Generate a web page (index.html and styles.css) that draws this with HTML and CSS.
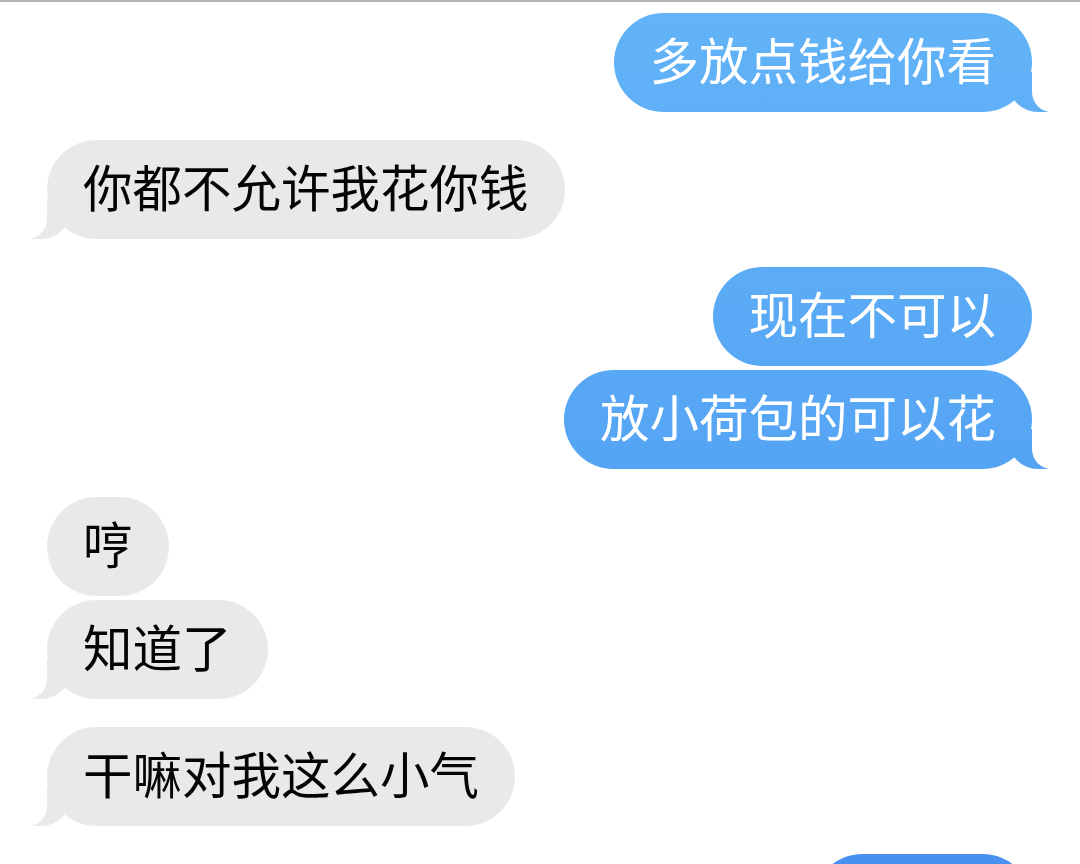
FILE: index.html
```html
<!DOCTYPE html>
<html lang="zh-CN">
<head>
<meta charset="utf-8">
<title>Messages</title>
<link rel="stylesheet" href="styles.css">
</head>
<body>
<div class="topline"></div>
<main class="chat">
  <div class="group me">
    <div class="bubble tail">多放点钱给你看</div>
  </div>
  <div class="group them">
    <div class="bubble tail">你都不允许我花你钱</div>
  </div>
  <div class="group me">
    <div class="bubble">现在不可以</div>
    <div class="bubble tail">放小荷包的可以花</div>
  </div>
  <div class="group them">
    <div class="bubble">哼</div>
    <div class="bubble tail">知道了</div>
  </div>
  <div class="group them">
    <div class="bubble tail">干嘛对我这么小气</div>
  </div>
  <div class="group me">
    <div class="bubble tail peek"></div>
  </div>
</main>
</body>
</html>
```

FILE: styles.css
```css
html, body {
  margin: 0;
  padding: 0;
  background: #ffffff;
  height: 864px;
  overflow: hidden;
}

body {
  font-family: "Noto Sans CJK SC", "Noto Sans", sans-serif;
}

.topline {
  height: 2px;
  background: #b4b4b8;
}

.chat {
  display: flex;
  flex-direction: column;
  gap: 28px;
  padding: 11px 48px 0 47px;
}

.group {
  display: flex;
  flex-direction: column;
  gap: 4px;
}

.me {
  align-items: flex-end;
}

.them {
  align-items: flex-start;
}

.bubble {
  position: relative;
  height: 99px;
  line-height: 92px;
  padding: 0 36px;
  box-sizing: border-box;
  font-size: 49.5px;
  border-radius: 50px;
  white-space: nowrap;
}

.peek {
  width: 219px;
}

.me .bubble {
  color: #ffffff;
  background: linear-gradient(to bottom, #63b3f8 0px, #56a6f5 430px, #4790f0 864px) fixed;
}

.them .bubble {
  color: #050505;
  background: #e9e9eb;
}

.tail::before,
.tail::after {
  content: "";
  position: absolute;
  bottom: 0;
  height: 40px;
}

.me .tail::before {
  right: -16px;
  width: 40px;
  background: inherit;
  border-bottom-left-radius: 30px;
  z-index: 0;
}

.me .tail::after {
  right: -20px;
  width: 20px;
  background: #ffffff;
  border-bottom-left-radius: 20px;
  z-index: 1;
}

.them .tail::before {
  left: -16px;
  width: 40px;
  background: #e9e9eb;
  border-bottom-right-radius: 30px;
  z-index: 0;
}

.them .tail::after {
  left: -20px;
  width: 20px;
  background: #ffffff;
  border-bottom-right-radius: 20px;
  z-index: 1;
}
```
